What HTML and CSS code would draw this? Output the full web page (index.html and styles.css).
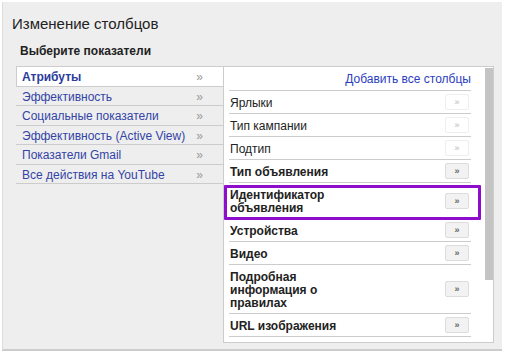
FILE: index.html
```html
<!DOCTYPE html>
<html lang="ru">
<head>
  <meta charset="UTF-8">
  <title>Изменение столбцов</title>
  <link rel="stylesheet" href="styles.css">
</head>
<body>
  <div class="dialog">
    <div class="title">Изменение столбцов</div>
    <div class="subtitle">Выберите показатели</div>

    <div class="columns">
      <ul class="groups">
        <li class="group selected"><span>Атрибуты</span><span class="arrow">&raquo;</span></li>
        <li class="group"><span>Эффективность</span><span class="arrow">&raquo;</span></li>
        <li class="group"><span>Социальные показатели</span><span class="arrow">&raquo;</span></li>
        <li class="group"><span>Эффективность (Active View)</span><span class="arrow">&raquo;</span></li>
        <li class="group"><span>Показатели Gmail</span><span class="arrow">&raquo;</span></li>
        <li class="group"><span>Все действия на YouTube</span><span class="arrow">&raquo;</span></li>
      </ul>

      <div class="metrics">
        <div class="metrics-list">
          <div class="add-all"><a href="#">Добавить все столбцы</a></div>
          <div class="metric"><span class="label">Ярлыки</span><button class="add" disabled>&raquo;</button></div>
          <div class="metric"><span class="label">Тип кампании</span><button class="add" disabled>&raquo;</button></div>
          <div class="metric"><span class="label">Подтип</span><button class="add" disabled>&raquo;</button></div>
          <div class="metric bold"><span class="label">Тип объявления</span><button class="add">&raquo;</button></div>
          <div class="metric bold marked"><span class="label">Идентификатор объявления</span><button class="add">&raquo;</button></div>
          <div class="metric bold"><span class="label">Устройства</span><button class="add">&raquo;</button></div>
          <div class="metric bold"><span class="label">Видео</span><button class="add">&raquo;</button></div>
          <div class="metric bold"><span class="label">Подробная информация о правилах</span><button class="add">&raquo;</button></div>
          <div class="metric bold"><span class="label">URL изображения</span><button class="add">&raquo;</button></div>
        </div>
        <div class="scrollbar"><div class="thumb"></div></div>
      </div>
    </div>
  </div>
</body>
</html>
```

FILE: styles.css
```css
body {
  margin: 0;
  background: #ffffff;
  font-family: "Liberation Sans", Arial, sans-serif;
  color: #222222;
}

.dialog {
  margin: 2px 0 0 2px;
  width: 500px;
  height: 349px;
  background: #eeeeee;
  border-left: 1px solid #dddddd;
  border-bottom: 2px solid #cccccc;
  box-sizing: border-box;
}

.title {
  padding: 13px 0 0 9px;
  font-size: 15px;
  line-height: 17px;
  color: #222222;
}

.subtitle {
  margin-top: 12px;
  padding-left: 17px;
  font-size: 12px;
  line-height: 14px;
  font-weight: bold;
  color: #222222;
}

.columns {
  display: flex;
  align-items: flex-start;
  margin: 8px 0 0 13px;
}

/* left: groups */
.groups {
  list-style: none;
  margin: 0;
  padding: 0;
  width: 207px;
}

.group {
  display: flex;
  justify-content: space-between;
  padding: 4px 20px 1.5px 6px;
  font-size: 12px;
  line-height: 13px;
  color: #3344a6;
  border-bottom: 1px solid #cccccc;
}

.group.selected {
  background: #ffffff;
  border-top: 1px solid #cccccc;
  border-left: 1px solid #cccccc;
  padding-left: 5px;
  font-weight: bold;
  color: #2d3c9c;
}

.group .arrow {
  color: #999999;
  font-weight: normal;
}

/* right: metrics */
.metrics {
  display: flex;
  height: 277px;
  box-sizing: border-box;
  background: #ffffff;
  border: 1px solid #cccccc;
}

.metrics-list {
  width: 242px;
  padding-left: 5px;
}

.add-all {
  padding: 6px 0 4px;
  line-height: 13px;
  font-size: 12px;
  text-align: right;
  border-bottom: 1px solid #cccccc;
}

.add-all a {
  color: #2b3dbd;
  text-decoration: none;
}

.metric {
  position: relative;
  display: flex;
  justify-content: space-between;
  align-items: center;
  padding: 3px 0 3px 1px;
  font-size: 12px;
  line-height: 13px;
  color: #222222;
  border-bottom: 1px solid #cccccc;
}

.metric.bold {
  font-weight: bold;
}

.metric .label {
  max-width: 120px;
  padding-top: 3px;
}

.add {
  width: 24px;
  height: 16px;
  margin: 0 2px 0 0;
  padding: 0;
  font-family: "Liberation Sans", Arial, sans-serif;
  font-size: 9px;
  line-height: 14px;
  font-weight: bold;
  color: #666666;
  background: #f2f2f2;
  border: 1px solid #dcdcdc;
  border-radius: 2px;
}

.add:disabled {
  background: #ffffff;
  border-color: #eeeeee;
  color: #cccccc;
}

/* annotation frame */
.metric.marked::after {
  content: "";
  position: absolute;
  top: 2px;
  left: -5px;
  right: -10px;
  bottom: -2px;
  border: 3px solid #8e0ccb;
  border-radius: 1px;
}

.scrollbar {
  margin-left: 14px;
  padding-top: 1px;
}

.thumb {
  width: 8px;
  height: 212px;
  background: #c4c4c4;
}
```
